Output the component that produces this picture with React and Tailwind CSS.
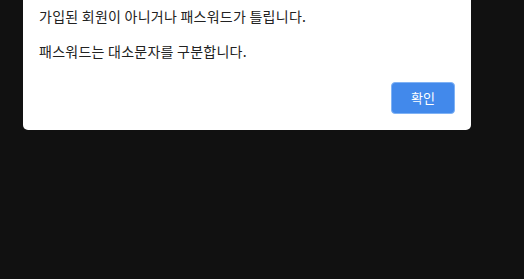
export default function App() {
  return (
    <div className="h-[279px] w-full bg-[#111111] font-['Noto_Sans_CJK_KR','Noto_Sans',sans-serif]">
      <div className="ml-[23px] w-[448px] rounded-b-[5px] bg-white px-4 pb-4 pt-[6px]">
        <div className="text-[14px] leading-[20px] tracking-[0.25px] text-[#222222]">
          <p>가입된 회원이 아니거나 패스워드가 틀립니다.</p>
          <p className="mt-[15px]">패스워드는 대소문자를 구분합니다.</p>
        </div>
        <div className="mt-[21px] flex justify-end">
          <button className="h-8 w-16 rounded-[4px] border border-[#7fb2f5] bg-[#4289eb] text-[13px] text-white">
            확인
          </button>
        </div>
      </div>
    </div>
  );
}
